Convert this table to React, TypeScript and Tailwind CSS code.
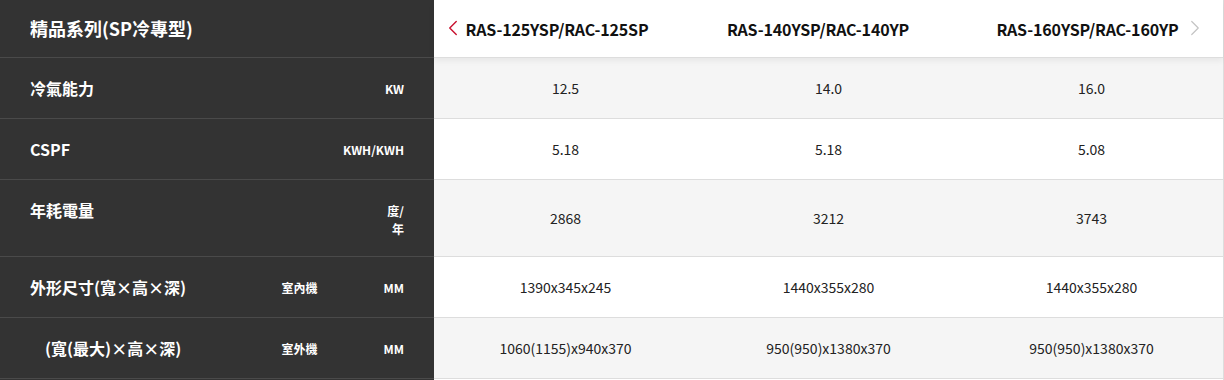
import { ChevronLeft, ChevronRight } from "lucide-react";

const models = [
  { name: "RAS-125YSP/RAC-125SP", shift: "pr-[17px]" },
  { name: "RAS-140YSP/RAC-140YP", shift: "pr-[21px]" },
  { name: "RAS-160YSP/RAC-160YP", shift: "pr-[8px]" },
];

const rows = [
  { label: "冷氣能力", unit: "KW", values: ["12.5", "14.0", "16.0"], h: "h-[61px]" },
  { label: "CSPF", unit: "KWH/KWH", values: ["5.18", "5.18", "5.08"], h: "h-[61px]" },
  { label: "年耗電量", unit: "度/\n年", values: ["2868", "3212", "3743"], h: "h-[77px]" },
  {
    label: "外形尺寸(寬×高×深)",
    sub: "室內機",
    unit: "MM",
    values: ["1390x345x245", "1440x355x280", "1440x355x280"],
    h: "h-[61px]",
  },
  {
    label: "(寬(最大)×高×深)",
    sub: "室外機",
    unit: "MM",
    indent: true,
    values: ["1060(1155)x940x370", "950(950)x1380x370", "950(950)x1380x370"],
    h: "h-[61px]",
  },
];

export default function App() {
  return (
    <div
      className="w-[1224px] h-[380px] bg-white flex"
      style={{ fontFamily: '"Noto Sans CJK TC", "Noto Sans", sans-serif' }}
    >
      <div className="w-[434px] shrink-0 bg-[#333333] text-white">
        <div className="h-[58px] border-b border-[#4a4a4a] flex items-center pl-[30px] text-[18px] font-bold">
          精品系列(SP冷專型)
        </div>
        {rows.map((r, i) => (
          <div
            key={i}
            className={`${r.h} border-b border-[#4a4a4a] flex items-start pt-[20px] pr-[30px]`}
          >
            <div
              className={`flex-1 text-[16px] font-bold leading-[21px] ${r.indent ? "pl-[45px]" : "pl-[30px]"}`}
            >
              {r.label}
            </div>
            {r.sub && (
              <div className="w-[36px] mr-[66px] text-[12px] font-bold leading-[21px]">{r.sub}</div>
            )}
            <div className="text-[12px] font-bold text-right whitespace-pre-line leading-[18px] pt-[2px]">
              {r.unit}
            </div>
          </div>
        ))}
      </div>
      <div className="flex-1 border-r border-[#dddddd] relative">
        <div className="h-[58px] flex items-center relative z-10 bg-white shadow-[0_3px_6px_rgba(0,0,0,0.06)] border-b border-[#dddddd]">
          <ChevronLeft className="absolute left-[6px] top-[15px] w-[26px] h-[26px] text-[#c8102e]" strokeWidth={1.3} />
          {models.map((m, i) => (
            <div
              key={i}
              className={`w-[263px] shrink-0 text-center text-[16px] font-bold tracking-[-0.15px] text-[#111111] ${m.shift}`}
            >
              {m.name}
            </div>
          ))}
          <ChevronRight className="absolute right-[15px] top-[15px] w-[26px] h-[26px] text-[#c4c4c4]" strokeWidth={1.1} />
        </div>
        {rows.map((r, i) => (
          <div
            key={i}
            className={`${r.h} flex items-center border-b border-[#dddddd] ${i % 2 === 0 ? "bg-[#f5f5f5]" : "bg-white"}`}
          >
            {r.values.map((v, j) => (
              <div key={j} className="flex-1 text-center text-[14px] text-[#222222]">
                {v}
              </div>
            ))}
          </div>
        ))}
      </div>
    </div>
  );
}
